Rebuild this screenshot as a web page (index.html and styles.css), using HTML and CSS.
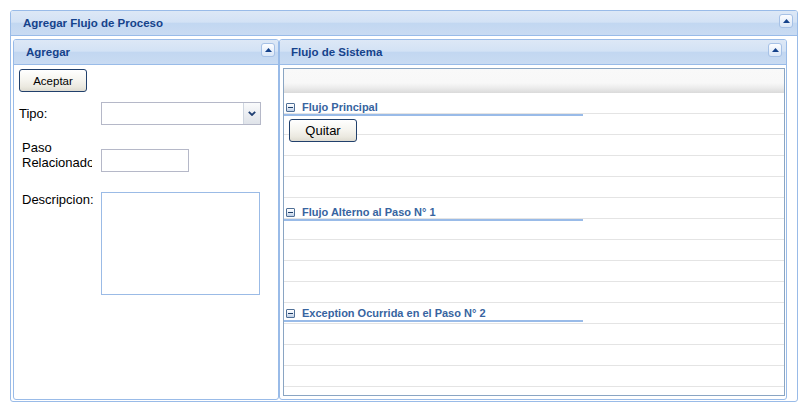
FILE: index.html
```html
<!DOCTYPE html>
<html lang="es">
<head>
<meta charset="utf-8">
<title>Agregar Flujo de Proceso</title>
<link rel="stylesheet" href="styles.css">
</head>
<body>
<div class="page">
  <div class="panel outer">
    <div class="phead">
      <span class="ptitle">Agregar Flujo de Proceso</span>
      <span class="tool"><svg width="7" height="4" viewBox="0 0 7 4"><polygon points="0,4 3.5,0 7,4" fill="#15428b"/></svg></span>
    </div>
    <div class="outer-body">
      <div class="panel left">
        <div class="phead">
          <span class="ptitle">Agregar</span>
          <span class="tool tool-left"><svg width="7" height="4" viewBox="0 0 7 4"><polygon points="0,4 3.5,0 7,4" fill="#15428b"/></svg></span>
        </div>
        <div class="left-body">
          <button class="btn aceptar" type="button">Aceptar</button>
          <div class="frow tipo">
            <label class="lbl lbl-tipo">Tipo:</label>
            <div class="select">
              <span class="trigger"><svg width="8" height="5" viewBox="0 0 8 5"><polyline points="0.8,0.8 4,4 7.2,0.8" fill="none" stroke="#1f3f73" stroke-width="1.8"/></svg></span>
            </div>
          </div>
          <div class="frow paso">
            <label class="lbl lbl-paso">Paso Relacionado</label>
            <div class="input"></div>
          </div>
          <div class="frow desc">
            <label class="lbl lbl-desc">Descripcion:</label>
            <div class="textarea"></div>
          </div>
        </div>
      </div>
      <div class="panel right">
        <div class="phead">
          <span class="ptitle ptitle-right">Flujo de Sistema</span>
          <span class="tool"><svg width="7" height="4" viewBox="0 0 7 4"><polygon points="0,4 3.5,0 7,4" fill="#15428b"/></svg></span>
        </div>
        <div class="right-body">
          <div class="grid">
            <div class="ghead"></div>
            <div class="grow group"><div class="gtitle"><span class="minus"></span><span class="gtext">Flujo Principal</span></div></div>
            <div class="grow grow-btn"><button class="btn quitar" type="button">Quitar</button></div>
            <div class="grow"></div>
            <div class="grow"></div>
            <div class="grow"></div>
            <div class="grow group"><div class="gtitle"><span class="minus"></span><span class="gtext">Flujo Alterno al Paso N° 1</span></div></div>
            <div class="grow"></div>
            <div class="grow"></div>
            <div class="grow"></div>
            <div class="grow"></div>
            <div class="grow group"><div class="gtitle gtitle-up"><span class="minus"></span><span class="gtext">Exception Ocurrida en el Paso N° 2</span></div></div>
            <div class="grow"></div>
            <div class="grow"></div>
            <div class="grow"></div>
            <div class="grow"></div>
          </div>
        </div>
      </div>
    </div>
  </div>
</div>
</body>
</html>
```
FILE: styles.css
```css
body {
  margin: 0;
  background: #ffffff;
  font-family: "Liberation Sans", Arial, sans-serif;
}

.page {
  padding: 10px 0 0 10px;
}

.panel {
  box-sizing: border-box;
  border: 1px solid #99bbe8;
  border-radius: 3px;
  background: #ffffff;
  display: flex;
  flex-direction: column;
}

.outer {
  width: 788px;
  height: 392px;
}

.phead {
  box-sizing: border-box;
  height: 25px;
  flex: none;
  border-bottom: 1px solid #99bbe8;
  border-radius: 2px 2px 0 0;
  background: linear-gradient(to bottom, #dde8f6 0%, #d3e2f5 46%, #c2d7f1 52%, #c9dbf2 100%);
  display: flex;
  align-items: center;
}

.ptitle {
  flex: 1;
  padding-left: 12px;
  font-weight: bold;
  font-size: 11.5px;
  line-height: 14px;
  color: #15428b;
  white-space: nowrap;
}

.ptitle-right {
  padding-left: 11px;
}

.tool {
  box-sizing: border-box;
  width: 14px;
  height: 14px;
  flex: none;
  align-self: flex-start;
  margin: 3px 4px 0 0;
  border: 1px solid #a6c1e6;
  border-radius: 3px;
  background: linear-gradient(to bottom, #fcfdff 0%, #eaf1fb 50%, #dbe7f7 100%);
  display: flex;
  align-items: center;
  justify-content: center;
}

.tool svg {
  display: block;
}

.tool-left {
  margin-right: 3px;
}

.outer-body {
  flex: 1;
  min-height: 0;
  display: flex;
  padding: 3px 10px 1px 2px;
}

.left {
  width: 266px;
  flex: none;
}

.right {
  width: 508px;
  flex: none;
}

.left-body {
  flex: 1;
  padding: 4px 0 0 5px;
}

.btn {
  box-sizing: border-box;
  display: block;
  width: 68px;
  height: 23px;
  padding: 0;
  border: 1px solid #21406c;
  border-radius: 3px;
  background: linear-gradient(to bottom, #ffffff 0%, #f6f5f0 45%, #ebe9e0 80%, #dedbd0 100%);
  font-family: "Liberation Sans", Arial, sans-serif;
  font-size: 11.5px;
  color: #000000;
}

.frow {
  display: flex;
}

.lbl {
  font-size: 13px;
  line-height: 15px;
  color: #000000;
}

.tipo {
  margin-top: 10px;
  align-items: center;
}

.lbl-tipo {
  width: 82px;
}

.select {
  box-sizing: border-box;
  width: 160px;
  height: 23px;
  border: 1px solid #b5b8c8;
  background: #ffffff;
  display: flex;
  justify-content: flex-end;
}

.trigger {
  box-sizing: border-box;
  width: 17px;
  height: 100%;
  border-left: 1px solid #cfd6e0;
  background: linear-gradient(to bottom, #fafbfc 0%, #eceef2 50%, #dfe3e9 100%);
  display: flex;
  align-items: center;
  justify-content: center;
}

.trigger svg {
  display: block;
}

.paso {
  margin-top: 15px;
  align-items: flex-end;
}

.lbl-paso {
  width: 70px;
  margin: 0 9px 0 3px;
  overflow: hidden;
  height: 30px;
}

.input {
  box-sizing: border-box;
  width: 88px;
  height: 23px;
  margin-bottom: -2px;
  border: 1px solid #b5b8c8;
  background: #ffffff;
}

.desc {
  margin-top: 22px;
  align-items: flex-start;
}

.lbl-desc {
  width: 79px;
  margin-left: 3px;
  white-space: nowrap;
}

.textarea {
  box-sizing: border-box;
  width: 159px;
  height: 103px;
  border: 1px solid #9bbbe6;
  background: #ffffff;
}

.right-body {
  flex: 1;
  min-height: 0;
  display: flex;
  padding: 3px 1px 3px 3px;
}

.grid {
  box-sizing: border-box;
  flex: 1;
  border: 1px solid #8aa5c3;
  overflow: hidden;
  background: #ffffff;
}

.ghead {
  height: 24px;
  background: linear-gradient(to bottom, #f9f9f9 0%, #f8f8f8 58%, #ececec 78%, #dadada 100%);
}

.grow {
  display: flow-root;
  height: 20px;
  border-bottom: 1px solid #e4e4e4;
}

.grow-btn {
  box-sizing: content-box;
}

.gtitle {
  position: relative;
  width: 299px;
  height: 20px;
  box-sizing: border-box;
  padding-left: 2px;
  display: flex;
  align-items: flex-end;
}

.gtitle-up {
  margin-top: -4px;
}

.gtitle::after {
  content: "";
  position: absolute;
  left: 0;
  top: 21px;
  width: 299px;
  height: 2px;
  background: #99bbe8;
}

.minus {
  position: relative;
  box-sizing: border-box;
  width: 9px;
  height: 9px;
  margin-bottom: 1px;
  margin-right: 7px;
  border: 1px solid #4f6f96;
  border-radius: 1px;
  background: linear-gradient(to bottom, #ffffff 0%, #e6eef9 50%, #bccde4 100%);
}

.minus::before {
  content: "";
  position: absolute;
  left: 1px;
  top: 3px;
  width: 5px;
  height: 1px;
  background: #1d3d66;
}

.gtext {
  font-weight: bold;
  font-size: 11px;
  line-height: 11px;
  color: #3764a0;
  white-space: nowrap;
}

.quitar {
  margin: 5px 0 0 5px;
  font-size: 13px;
}
```
